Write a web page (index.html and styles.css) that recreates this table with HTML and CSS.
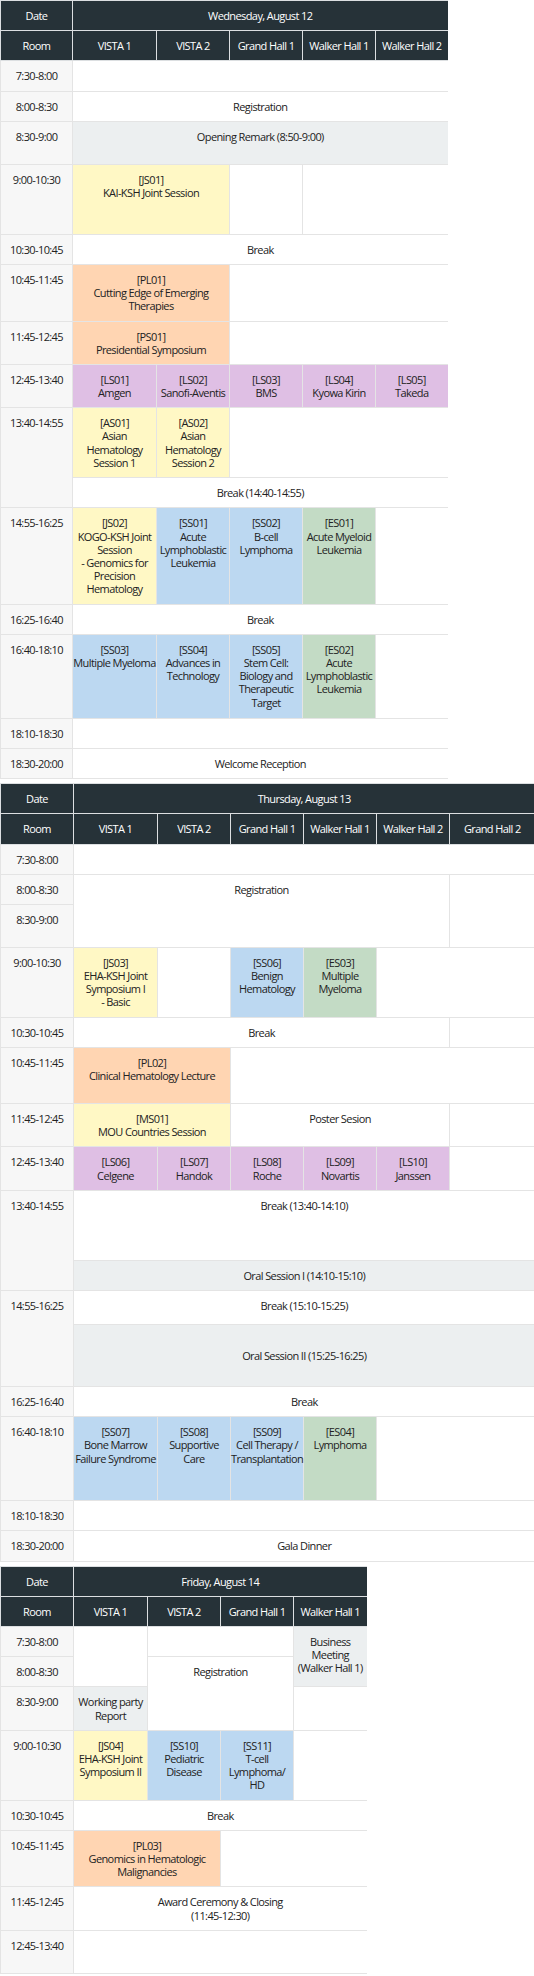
FILE: index.html
```html
<!DOCTYPE html>
<html lang="en">
<head>
  <meta charset="UTF-8">
  <meta name="viewport" content="width=device-width, initial-scale=1.0">
  <title>Program at a Glance</title>
  <link rel="stylesheet" href="styles.css">
</head>
<body>
  <!-- Day 1 -->
  <table class="schedule wed">
    <colgroup>
      <col class="w72"><col class="w84"><col class="w73"><col class="w73"><col class="w73"><col class="w72">
    </colgroup>
    <tr><th>Date</th><th colspan="5">Wednesday, August 12</th></tr>
    <tr><th>Room</th><th>VISTA 1</th><th>VISTA 2</th><th>Grand Hall 1</th><th>Walker Hall 1</th><th>Walker Hall 2</th></tr>
    <tr><td class="time">7:30-8:00</td><td colspan="5"></td></tr>
    <tr><td class="time">8:00-8:30</td><td colspan="5">Registration</td></tr>
    <tr class="h2"><td class="time">8:30-9:00</td><td colspan="5" class="grey">Opening Remark (8:50-9:00)</td></tr>
    <tr class="h4"><td class="time">9:00-10:30</td><td colspan="2" class="yellow">[JS01]<br>KAI-KSH Joint Session</td><td></td><td colspan="2"></td></tr>
    <tr><td class="time">10:30-10:45</td><td colspan="5">Break</td></tr>
    <tr class="h3"><td class="time">10:45-11:45</td><td colspan="2" class="orange">[PL01]<br>Cutting Edge of Emerging<br>Therapies</td><td colspan="3"></td></tr>
    <tr class="h2"><td class="time">11:45-12:45</td><td colspan="2" class="orange">[PS01]<br>Presidential Symposium</td><td colspan="3"></td></tr>
    <tr class="h2">
      <td class="time">12:45-13:40</td>
      <td class="purple">[LS01]<br>Amgen</td>
      <td class="purple">[LS02]<br>Sanofi-Aventis</td>
      <td class="purple">[LS03]<br>BMS</td>
      <td class="purple">[LS04]<br>Kyowa Kirin</td>
      <td class="purple">[LS05]<br>Takeda</td>
    </tr>
    <tr class="h4">
      <td class="time" rowspan="2">13:40-14:55</td>
      <td class="yellow">[AS01]<br>Asian<br>Hematology<br>Session 1</td>
      <td class="yellow">[AS02]<br>Asian<br>Hematology<br>Session 2</td>
      <td colspan="3"></td>
    </tr>
    <tr><td colspan="5">Break (14:40-14:55)</td></tr>
    <tr class="h6">
      <td class="time">14:55-16:25</td>
      <td class="yellow">[JS02]<br>KOGO-KSH Joint<br>Session<br>- Genomics for<br>Precision<br>Hematology</td>
      <td class="blue">[SS01]<br>Acute<br>Lymphoblastic<br>Leukemia</td>
      <td class="blue">[SS02]<br>B-cell<br>Lymphoma</td>
      <td class="green">[ES01]<br>Acute Myeloid<br>Leukemia</td>
      <td></td>
    </tr>
    <tr><td class="time">16:25-16:40</td><td colspan="5">Break</td></tr>
    <tr class="h5">
      <td class="time">16:40-18:10</td>
      <td class="blue">[SS03]<br>Multiple Myeloma</td>
      <td class="blue">[SS04]<br>Advances in<br>Technology</td>
      <td class="blue">[SS05]<br>Stem Cell:<br>Biology and<br>Therapeutic<br>Target</td>
      <td class="green">[ES02]<br>Acute<br>Lymphoblastic<br>Leukemia</td>
      <td></td>
    </tr>
    <tr><td class="time">18:10-18:30</td><td colspan="5"></td></tr>
    <tr><td class="time">18:30-20:00</td><td colspan="5">Welcome Reception</td></tr>
  </table>

  <!-- Day 2 -->
  <table class="schedule thu">
    <colgroup>
      <col class="w73"><col class="w84"><col class="w73"><col class="w73"><col class="w73"><col class="w73"><col class="w85">
    </colgroup>
    <tr><th>Date</th><th colspan="6">Thursday, August 13</th></tr>
    <tr><th>Room</th><th>VISTA 1</th><th>VISTA 2</th><th>Grand Hall 1</th><th>Walker Hall 1</th><th>Walker Hall 2</th><th>Grand Hall 2</th></tr>
    <tr><td class="time">7:30-8:00</td><td colspan="6"></td></tr>
    <tr><td class="time">8:00-8:30</td><td colspan="5" rowspan="2">Registration</td><td rowspan="2"></td></tr>
    <tr class="h2"><td class="time">8:30-9:00</td></tr>
    <tr class="h4">
      <td class="time">9:00-10:30</td>
      <td class="yellow">[JS03]<br>EHA-KSH Joint<br>Symposium I<br>- Basic</td>
      <td></td>
      <td class="blue">[SS06]<br>Benign<br>Hematology</td>
      <td class="green">[ES03]<br>Multiple<br>Myeloma</td>
      <td colspan="2"></td>
    </tr>
    <tr><td class="time">10:30-10:45</td><td colspan="5">Break</td><td></td></tr>
    <tr class="h3"><td class="time">10:45-11:45</td><td colspan="2" class="orange">[PL02]<br>Clinical Hematology Lecture</td><td colspan="4"></td></tr>
    <tr class="h2"><td class="time">11:45-12:45</td><td colspan="2" class="yellow">[MS01]<br>MOU Countries Session</td><td colspan="3">Poster Sesion</td><td></td></tr>
    <tr class="h2">
      <td class="time">12:45-13:40</td>
      <td class="purple">[LS06]<br>Celgene</td>
      <td class="purple">[LS07]<br>Handok</td>
      <td class="purple">[LS08]<br>Roche</td>
      <td class="purple">[LS09]<br>Novartis</td>
      <td class="purple">[LS10]<br>Janssen</td>
      <td></td>
    </tr>
    <tr class="h4"><td class="time" rowspan="2">13:40-14:55</td><td colspan="6">Break (13:40-14:10)</td></tr>
    <tr><td colspan="6" class="grey">Oral Session I (14:10-15:10)</td></tr>
    <tr class="h34"><td class="time" rowspan="2">14:55-16:25</td><td colspan="6">Break (15:10-15:25)</td></tr>
    <tr class="h62"><td colspan="6" class="grey mid">Oral Session II (15:25-16:25)</td></tr>
    <tr><td class="time">16:25-16:40</td><td colspan="6">Break</td></tr>
    <tr class="h5">
      <td class="time">16:40-18:10</td>
      <td class="blue">[SS07]<br>Bone Marrow<br>Failure Syndrome</td>
      <td class="blue">[SS08]<br>Supportive<br>Care</td>
      <td class="blue">[SS09]<br>Cell Therapy /<br>Transplantation</td>
      <td class="green">[ES04]<br>Lymphoma</td>
      <td colspan="2"></td>
    </tr>
    <tr><td class="time">18:10-18:30</td><td colspan="6"></td></tr>
    <tr><td class="time">18:30-20:00</td><td colspan="6">Gala Dinner</td></tr>
  </table>

  <!-- Day 3 -->
  <table class="schedule fri">
    <colgroup>
      <col class="w73"><col class="w74"><col class="w73"><col class="w73"><col class="w73">
    </colgroup>
    <tr><th>Date</th><th colspan="4">Friday, August 14</th></tr>
    <tr><th>Room</th><th>VISTA 1</th><th>VISTA 2</th><th>Grand Hall 1</th><th>Walker Hall 1</th></tr>
    <tr><td class="time">7:30-8:00</td><td rowspan="2"></td><td colspan="2"></td><td rowspan="2" class="grey">Business<br>Meeting<br>(Walker Hall 1)</td></tr>
    <tr><td class="time">8:00-8:30</td><td colspan="2" rowspan="2">Registration</td></tr>
    <tr class="h2"><td class="time">8:30-9:00</td><td class="grey">Working party<br>Report</td><td></td></tr>
    <tr class="h4">
      <td class="time">9:00-10:30</td>
      <td class="yellow">[JS04]<br>EHA-KSH Joint<br>Symposium II</td>
      <td class="blue">[SS10]<br>Pediatric<br>Disease</td>
      <td class="blue">[SS11]<br>T-cell<br>Lymphoma/<br>HD</td>
      <td></td>
    </tr>
    <tr><td class="time">10:30-10:45</td><td colspan="4">Break</td></tr>
    <tr class="h3"><td class="time">10:45-11:45</td><td colspan="2" class="orange">[PL03]<br>Genomics in Hematologic<br>Malignancies</td><td colspan="2"></td></tr>
    <tr class="h2"><td class="time">11:45-12:45</td><td colspan="4">Award Ceremony &amp; Closing<br>(11:45-12:30)</td></tr>
    <tr class="h2"><td class="time">12:45-13:40</td><td colspan="4" class="edge"></td></tr>
  </table>
</body>
</html>
```

FILE: styles.css
```css
body {
  margin: 0;
  padding: 0;
  background: #fff;
  color: #222;
  font-family: 'Open Sans', sans-serif;
  font-size: 11px;
  line-height: 1.2;
  letter-spacing: -0.6px;
}

/* Schedule tables */
.schedule {
  border-collapse: collapse;
  table-layout: fixed;
  border-right: hidden;
  margin-bottom: 4px;
}

.wed { width: 447px; }
.thu { width: 534px; }
.fri { width: 366px; }

.w72 { width: 72px; }
.w73 { width: 73px; }
.w74 { width: 74px; }
.w84 { width: 84px; }
.w85 { width: 85px; }

.schedule th {
  background: #263238;
  color: #fff;
  font-weight: 400;
  padding: 8px 0;
  border: 1px solid #dcdfe1;
  text-align: center;
}

.schedule td {
  padding: 8px 0;
  border: 1px solid #e4e4e4;
  text-align: center;
  vertical-align: top;
}

.schedule td.time {
  background: #f7f7f7;
}

/* Row heights */
.h2 { height: 43px; }
.h3 { height: 56px; }
.h4 { height: 70px; }
.h5 { height: 84px; }
.h6 { height: 96px; }
.h34 { height: 34px; }
.h62 { height: 62px; }

/* Session colours */
.yellow { background: #fff8c5; }
.orange { background: #ffd5b2; }
.purple { background: #dfbfe4; }
.blue { background: #bcd8f1; }
.green { background: #c3dbc5; }
.grey { background: #eceff0; }

.mid { vertical-align: middle !important; }
.edge { border-left-color: #d9b8df !important; }
```
